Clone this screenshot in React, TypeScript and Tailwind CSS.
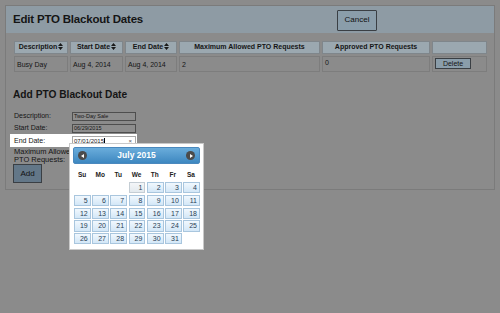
import React from "react";

const SortIcon = () => (
  <svg width="5" height="7" viewBox="0 0 5 7" className="inline-block ml-[1px] align-[-1px]">
    <path d="M2.5 0 L5 3 L0 3 Z M0 4 L5 4 L2.5 7 Z" fill="#1a1a1a" />
  </svg>
);

const headers = [
  { label: "Description", w: "w-[54px]", sort: true },
  { label: "Start Date", w: "w-[53px]", sort: true },
  { label: "End Date", w: "w-[52px]", sort: true },
  { label: "Maximum Allowed PTO Requests", w: "w-[141px]", sort: false },
  { label: "Approved PTO Requests", w: "w-[108px]", sort: false },
  { label: "", w: "w-[55px]", sort: false },
];

const days = ["Su", "Mo", "Tu", "We", "Th", "Fr", "Sa"];
const cells: (number | null)[] = [null, null, null, ...Array.from({ length: 31 }, (_, i) => i + 1), null];

const DatePicker = () => (
  <div className="absolute left-[69px] top-[143px] w-[135px] h-[107px] bg-white border border-[#c9c9c9] p-[3px]">
    <div className="h-[17px] rounded-[2px] border border-[#4a88bd] bg-gradient-to-b from-[#6aaddb] to-[#3d87c0] flex items-center justify-between px-[4px]">
      <span className="w-[9px] h-[9px] rounded-full bg-[#4b4b4b] flex items-center justify-center">
        <span className="w-0 h-0 border-y-[2.5px] border-y-transparent border-r-[3px] border-r-white mr-[1px]" />
      </span>
      <span className="text-white font-bold text-[8.5px]">July 2015</span>
      <span className="w-[9px] h-[9px] rounded-full bg-[#4b4b4b] flex items-center justify-center">
        <span className="w-0 h-0 border-y-[2.5px] border-y-transparent border-l-[3px] border-l-white ml-[1px]" />
      </span>
    </div>
    <div className="grid grid-cols-7 gap-x-[2px] w-[125px] ml-[1px] mt-[3px] h-[15px] items-center">
      {days.map((d) => (
        <div key={d} className="text-center text-[6.5px] font-bold text-[#222]">{d}</div>
      ))}
    </div>
    <div className="grid grid-cols-7 gap-x-[1.5px] gap-y-[1.5px] w-[126px] ml-[1px]">
      {cells.map((c, i) =>
        c === null ? (
          <div key={i} className="h-[11.3px]" />
        ) : (
          <div
            key={i}
            className={`h-[11.3px] border text-right pr-[2px] text-[7px] leading-[10px] text-[#2a4256] ${
              c === 1
                ? "border-[#c4cdd4] bg-gradient-to-b from-[#f4f6f8] to-[#e3e9ee]"
                : "border-[#a9c6de] bg-gradient-to-b from-[#f1f8fe] to-[#d3e7f7]"
            }`}
          >
            {c}
          </div>
        )
      )}
    </div>
  </div>
);

export default function App() {
  return (
    <div
      className="relative w-[500px] h-[313px] bg-[#8b8b8b] pt-[5px] pl-[5px] overflow-hidden"
      style={{ fontFamily: '"Liberation Sans", Arial, sans-serif' }}
    >
      <div className="w-[490px] h-[185px] border border-[#7b7b7b]">
        {/* header */}
        <div className="h-[27px] bg-[#8e9ba4] flex items-center pl-[7px]">
          <h1 className="text-[11.5px] font-bold text-[#151515] tracking-[-0.2px]">Edit PTO Blackout Dates</h1>
          <button className="ml-auto mr-[117px] w-[40px] h-[21px] border border-[#3a3f44] rounded-[1px] bg-[#8a9daa] text-[8px] text-[#111] mt-[1px]">
            Cancel
          </button>
        </div>

        {/* existing dates */}
        <table className="ml-[6px] mt-[6px] border-separate border-spacing-[2px] text-[7px] text-[#151515]">
          <thead>
            <tr>
              {headers.map((h, i) => (
                <th
                  key={i}
                  className={`${h.w} h-[13px] p-0 border border-[#7f868b] bg-[#9ba8b0] font-bold text-center`}
                >
                  {h.label}
                  {h.sort && <SortIcon />}
                </th>
              ))}
            </tr>
          </thead>
          <tbody>
            <tr className="align-top">
              <td className="h-[16px] border border-[#7d7d7d] pl-[2px] pt-[3px]">Busy Day</td>
              <td className="border border-[#7d7d7d] pl-[2px] pt-[3px]">Aug 4, 2014</td>
              <td className="border border-[#7d7d7d] pl-[2px] pt-[3px]">Aug 4, 2014</td>
              <td className="border border-[#7d7d7d] pl-[2px] pt-[3px]">2</td>
              <td className="border border-[#7d7d7d] pl-[2px] pt-[1px]">0</td>
              <td className="border border-[#7d7d7d] pl-[2px] pt-[1px]">
                <button className="w-[36px] h-[11px] border border-[#3a3f44] bg-[#8a9daa] text-[7px] leading-[9px]">
                  Delete
                </button>
              </td>
            </tr>
          </tbody>
        </table>

        {/* add form */}
        <h2 className="ml-[7px] mt-[13px] text-[10.2px] font-bold text-[#151515]">Add PTO Blackout Date</h2>
        <div className="mt-[8px] text-[7px] text-[#151515] flex flex-col">
          <div className="flex items-center h-[12px] pl-[8px]">
            <span className="w-[58px]">Description:</span>
            <span className="w-[64px] h-[9px] border border-[#4e4e4e] bg-[#8d8d8d] text-[5.5px] leading-[7px] pl-[1px]">Two-Day Sale</span>
          </div>
          <div className="flex items-center h-[12px] pl-[8px]">
            <span className="w-[58px]">Start Date:</span>
            <span className="w-[64px] h-[9px] border border-[#4e4e4e] bg-[#8d8d8d] text-[5.5px] leading-[7px] pl-[1px]">06/29/2015</span>
          </div>
          <div className="flex items-center h-[13px] w-[127px] ml-[4px] pl-[4px] bg-white">
            <span className="w-[58px]">End Date:</span>
            <span className="w-[64px] h-[10px] border border-[#a8a8a8] bg-white text-[6px] leading-[8px] pl-[1px] flex items-center text-[#222]">
              07/01/2015<span className="w-[0.5px] h-[6px] bg-black" />
              <span className="ml-auto mr-[3px] text-[6px] text-[#555]">×</span>
            </span>
          </div>
          <div className="pl-[8px] pt-[1px] leading-[8px] text-[7.5px]">
            Maximum Allowed
            <br />
            PTO Requests:
          </div>
          <button className="ml-[7px] mt-0 w-[29px] h-[19px] border border-[#3a3f44] bg-[#637788] text-[8px] text-[#111]">
            Add
          </button>
        </div>
      </div>

      <DatePicker />
    </div>
  );
}
